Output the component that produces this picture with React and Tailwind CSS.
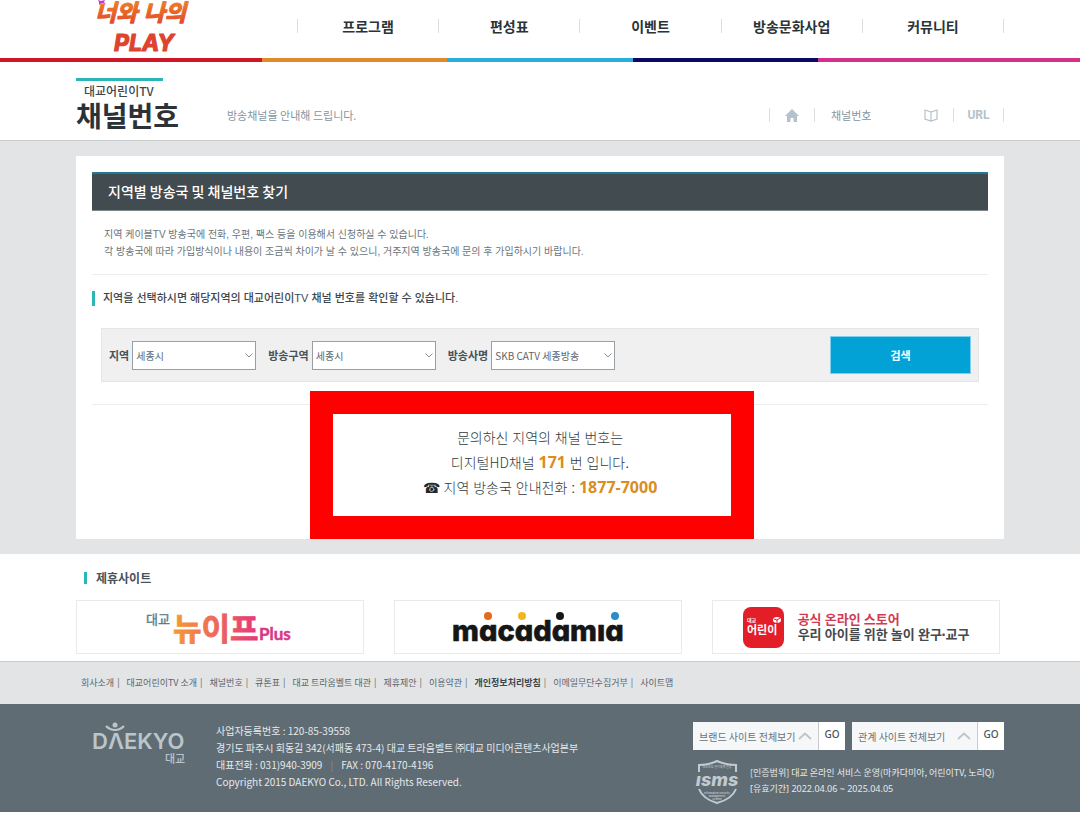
import React, { useState } from "react";

const menus = ["프로그램", "편성표", "이벤트", "방송문화사업", "커뮤니티"];

const footerLinks = [
  "회사소개",
  "대교어린이TV 소개",
  "채널번호",
  "큐톤표",
  "대교 트라움벨트 대관",
  "제휴제안",
  "이용약관",
  "개인정보처리방침",
  "이메일무단수집거부",
  "사이트맵",
];

const filters = [
  { id: "region", label: "지역", options: ["세종시", "서울시", "부산시"] },
  { id: "area", label: "방송구역", options: ["세종시"] },
  { id: "station", label: "방송사명", options: ["SKB CATV 세종방송"] },
];

const Divider = () => <span className="h-[14px] w-px shrink-0 bg-[#dcdfe1]" />;

const PlayLogo = () => (
  <svg width="100" height="58" viewBox="0 0 100 58" role="img">
    <defs>
      <linearGradient id="play" x1="0" y1="0" x2="0" y2="1">
        <stop offset="0" stopColor="#ee8026" />
        <stop offset="1" stopColor="#e0452c" />
      </linearGradient>
    </defs>
    <path d="M6 0l3 1 4-1-1 2 2 2-4-1-3 2v-3z" fill="#c735d6" />
    <g
      fontWeight="700"
      fontStyle="italic"
      strokeWidth="1.2"
      strokeLinejoin="round"
    >
      <text
        x="3"
        y="21"
        fontSize="23"
        fontFamily="'Liberation Sans', 'Noto Sans CJK KR', sans-serif"
        fill="url(#play)"
        stroke="url(#play)"
      >
        너와 나의
      </text>
      <text
        x="22"
        y="51"
        fontSize="23"
        fontFamily="Inter, sans-serif"
        fill="#dd432f"
        stroke="#dd432f"
      >
        PLAY
      </text>
    </g>
  </svg>
);

const Header = () => (
  <header>
    <div className="mx-auto flex h-[58px] max-w-[928px] items-start">
      <a href="#home" className="ml-4 shrink-0">
        <PlayLogo />
      </a>
      <nav className="ml-auto flex h-[52px] w-[707px] items-center">
        <Divider />
        {menus.map((menu) => (
          <React.Fragment key={menu}>
            <a
              href="#menu"
              className="flex-1 text-center text-[14px] leading-5 font-bold text-[#2b3338]"
            >
              {menu}
            </a>
            <Divider />
          </React.Fragment>
        ))}
      </nav>
    </div>
    <div className="flex h-1">
      <div className="flex-1 bg-[#cf1526]" />
      <div className="flex w-[928px]">
        <div className="flex-1 bg-[#cf1526]" />
        <div className="flex-1 bg-[#e08a2a]" />
        <div className="flex-1 bg-[#29aede]" />
        <div className="flex-1 bg-[#0a0a66]" />
        <div className="flex-1 bg-[#d52f8c]" />
      </div>
      <div className="flex-1 bg-[#d52f8c]" />
    </div>
  </header>
);

const PageTitle = () => (
  <div className="border-b border-[#c9cccf]">
    <div className="mx-auto flex h-[78px] max-w-[928px] items-end pb-[9px]">
      <div className="w-[151px]">
        <div className="h-[3px] w-[87px] bg-[#2bb5b8]" />
        <p className="pt-[2px] pl-2 text-[12px] leading-4 font-medium text-[#3c474d]">
          대교어린이TV
        </p>
        <h1 className="text-[28px] leading-8 font-bold text-[#2b3338]">
          채널번호
        </h1>
      </div>
      <p className="pb-2 text-[11px] leading-4 text-[#84959f]">
        방송채널을 안내해 드립니다.
      </p>
      <div className="ml-auto flex h-8 items-center text-[11px] leading-4 text-[#84959f]">
        <Divider />
        <a href="#home" aria-label="홈" className="px-[15px]">
          <svg width="14" height="13" viewBox="0 0 14 13" fill="#b3c3cc">
            <path d="M7 0L0 7h2v6h3.500V9h3v4H12V7h2z" />
          </svg>
        </a>
        <Divider />
        <span className="w-[109px] pl-4">채널번호</span>
        <button type="button" aria-label="스크랩" className="pr-[15px]">
          <svg
            width="14"
            height="13"
            viewBox="0 0 14 13"
            fill="none"
            stroke="#b3c3cc"
            strokeWidth="1.200"
          >
            <path d="M7 3L1 1v9l6 2 6-2V1zM7 3v9" />
          </svg>
        </button>
        <Divider />
        <button
          type="button"
          className="w-[49px] font-[Roboto,sans-serif] text-[12px] font-bold text-[#b3c3cc]"
        >
          URL
        </button>
        <Divider />
      </div>
    </div>
  </div>
);

const FilterSelect = ({ id, label, options }) => (
  <div className="flex items-center gap-[3px]">
    <label htmlFor={id} className="text-[11px] font-bold text-[#47525a]">
      {label}
    </label>
    <div className="relative">
      <select
        id={id}
        className="h-[29px] w-[124px] appearance-none border border-[#9a9fa3] bg-white pl-[3px] text-[10px] text-[#5d666c]"
      >
        {options.map((option) => (
          <option key={option}>{option}</option>
        ))}
      </select>
      <svg
        width="8"
        height="5"
        viewBox="0 0 8 5"
        fill="none"
        stroke="#8a9095"
        className="pointer-events-none absolute top-3 right-[3px]"
      >
        <path d="M.5.500L4 4 7.500.5" />
      </svg>
    </div>
  </div>
);

const ChannelFinder = ({ onSearch }) => (
  <form
    onSubmit={onSearch}
    className="mx-[9px] flex items-center gap-3 border border-[#e4e5e7] bg-[#f0f0f0] p-[7px]"
  >
    {filters.map((filter) => (
      <FilterSelect key={filter.id} {...filter} />
    ))}
    <button
      type="submit"
      className="ml-auto h-[38px] w-[141px] border border-[#7fd0ec] bg-[#02a2d7] text-[11px] font-bold text-white"
    >
      검색
    </button>
  </form>
);

const Result = () => (
  <div className="relative mt-[22px] border-t border-[#eceded] pt-[21px] text-center font-['Liberation_Sans','Noto_Sans_CJK_KR',sans-serif] text-[14px] leading-6 font-light text-[#30393e]">
    <p>문의하신 지역의 채널 번호는</p>
    <p>
      디지털
      <span className="font-['Noto_Sans_CJK_KR',sans-serif]">HD</span>
      채널{" "}
      <strong className="font-['Noto_Sans',sans-serif] text-[16px] font-bold text-[#d98d22]">
        171
      </strong>{" "}
      번 입니다.
    </p>
    <p>
      <span className="font-['DejaVu_Sans',sans-serif] text-[#20282c]">☎</span>{" "}
      지역 방송국 안내전화 :{" "}
      <strong className="font-['Noto_Sans',sans-serif] text-[16px] font-bold text-[#d98d22]">
        1877-7000
      </strong>
    </p>
    <div className="pointer-events-none absolute -top-[14px] left-[218px] h-[148px] w-[444px] border-[23px] border-[#ff0000]" />
  </div>
);

const NewifLogo = () => (
  <svg width="150" height="42" viewBox="0 0 150 42" role="img">
    <defs>
      <linearGradient id="newif" x1="0" y1="0" x2="1" y2="0">
        <stop offset="0" stopColor="#f59a35" />
        <stop offset="0.500" stopColor="#ec6a5a" />
        <stop offset="1" stopColor="#e5357c" />
      </linearGradient>
    </defs>
    <g fontFamily="'Liberation Sans', 'Noto Sans CJK KR', sans-serif">
      <text
        x="1"
        y="18"
        fontSize="13"
        fill="#5c7f86"
        stroke="#5c7f86"
        strokeWidth="0.400"
      >
        대교
      </text>
      <text
        x="28"
        y="34"
        fontSize="31"
        fontWeight="700"
        fill="url(#newif)"
        stroke="url(#newif)"
        strokeWidth="0.800"
      >
        뉴이프
      </text>
    </g>
    <text
      x="114"
      y="34"
      fontSize="17"
      fontWeight="700"
      fontFamily="Lato, sans-serif"
      fill="#d9388a"
      stroke="#d9388a"
      strokeWidth="0.500"
    >
      Plus
    </text>
  </svg>
);

const MacadamiaLogo = () => (
  <svg width="180" height="42" viewBox="0 0 180 42" role="img">
    <text
      x="4"
      y="35"
      fontSize="29"
      fontWeight="800"
      fontFamily="Inter, sans-serif"
      fill="#161616"
      stroke="#161616"
      strokeWidth="0.600"
      strokeLinejoin="round"
      className="[font-feature-settings:'cv11']"
    >
      macadamıa
    </text>
    <circle cx="40" cy="10" r="4" fill="#e46a1e" />
    <circle cx="74" cy="10" r="4" fill="#f2b71f" />
    <circle cx="112" cy="10" r="4" fill="#161616" />
    <circle cx="167" cy="10" r="4" fill="#2a8ccc" />
  </svg>
);

const StoreIcon = () => (
  <svg width="41" height="41" viewBox="0 0 41 41" role="img">
    <rect width="41" height="41" rx="8" fill="#e31e29" />
    <g
      fontFamily="'Liberation Sans', 'Noto Sans CJK KR', sans-serif"
      fontWeight="700"
      fill="#fff"
    >
      <text x="4" y="15" fontSize="5">
        대교
      </text>
      <text x="4" y="27" fontSize="11">
        어린이
      </text>
    </g>
    <ellipse cx="34" cy="13" rx="4" ry="3" fill="#fff" />
    <path d="M31 12l3 1 3-2M34 13v3" stroke="#e31e29" fill="none" />
  </svg>
);

const Partners = () => (
  <section className="mx-auto max-w-[928px] pt-[14px] pb-[7px]">
    <h2 className="ml-2 flex items-center gap-[9px] text-[12px] leading-5 font-bold text-[#47525a]">
      <span className="h-3 w-[3px] bg-[#2bb5b8]" />
      제휴사이트
    </h2>
    <div className="mt-3 mr-1 grid grid-cols-3 gap-[30px]">
      <a
        href="#newif"
        className="flex h-[54px] items-center justify-center border border-[#e9eaeb]"
      >
        <NewifLogo />
      </a>
      <a
        href="#macadamia"
        className="flex h-[54px] items-center justify-center border border-[#e9eaeb]"
      >
        <MacadamiaLogo />
      </a>
      <a
        href="#store"
        className="flex h-[54px] items-center justify-center gap-[14px] border border-[#e9eaeb] font-[Lato,'Noto_Sans_CJK_KR',sans-serif] text-[13px] leading-[15px] font-bold text-[#44494c]"
      >
        <StoreIcon />
        <span>
          <span className="block text-[#d43a52]">공식 온라인 스토어</span>
          우리 아이를 위한 놀이 완구·교구
        </span>
      </a>
    </div>
  </section>
);

const DaekyoLogo = () => (
  <svg width="98" height="46" viewBox="0 0 98 46" fill="#bcc5ca" role="img">
    <text
      x="0"
      y="27"
      fontSize="22"
      fontWeight="600"
      fontFamily="Inter, sans-serif"
    >
      DΛEKYO
    </text>
    <circle cx="23" cy="3" r="2.500" />
    <path
      d="M14 4q4 4 9 4t9-4"
      fill="none"
      stroke="#bcc5ca"
      strokeWidth="2.200"
    />
    <text
      x="73"
      y="41"
      fontSize="11"
      fontWeight="500"
      fontFamily="'Liberation Sans', 'Noto Sans CJK KR', sans-serif"
    >
      대교
    </text>
  </svg>
);

const IsmsBadge = () => (
  <svg width="49" height="45" viewBox="0 0 49 45" role="img">
    <g fill="none" stroke="#c3cacf" strokeWidth="2">
      <path d="M6 13V6q10 0 18-4 9 4 19 4v7" />
      <path d="M6 30q4 10 18 14 15-4 19-14" />
    </g>
    <g fill="#c3cacf" textAnchor="middle" fontFamily="Inter, sans-serif">
      <text
        x="24"
        y="27"
        fontSize="18"
        fontWeight="800"
        fontStyle="italic"
      >
        ısms
      </text>
      <text
        x="24"
        y="9"
        fontSize="3"
        fontFamily="'Liberation Sans', 'Noto Sans CJK KR', sans-serif"
      >
        정보보호 관리체계 인증
      </text>
      <g fontSize="2.600" fontWeight="600">
        <text x="24" y="34.500">
          Information Security
        </text>
        <text x="24" y="38">
          Management
        </text>
        <text x="24" y="41.300">
          System
        </text>
      </g>
    </g>
  </svg>
);

const SiteList = ({ label }) => (
  <div className="flex h-7 text-[#4b555b]">
    <button
      type="button"
      className="flex w-[125px] items-center justify-between bg-[#f6f7f8] px-[6px] text-[10px] text-[#66717a]"
    >
      {label}
      <svg
        width="14"
        height="8"
        viewBox="0 0 14 8"
        fill="none"
        stroke="#bfc4c8"
        strokeWidth="1.800"
      >
        <path d="M1 7l6-5.500L13 7" />
      </svg>
    </button>
    <button
      type="button"
      className="w-[27px] border-l border-[#c9cccf] bg-white pb-1 font-['Noto_Sans',sans-serif] text-[10px] font-medium"
    >
      GO
    </button>
  </div>
);

const Footer = () => (
  <footer>
    <div className="border-t border-[#c9cccf] bg-[#e2e4e6]">
      <ul className="mx-auto flex h-[42px] max-w-[928px] items-center pl-[5px] text-[9px] leading-4 text-[#5a656c]">
        {footerLinks.map((link, i) => (
          <li key={link} className="flex items-center">
            {i > 0 && <span className="pr-[7px] pl-[3px]">|</span>}
            <a
              href="#link"
              className={
                link === "개인정보처리방침" ? "font-bold text-[#3c474d]" : ""
              }
            >
              {link}
            </a>
          </li>
        ))}
      </ul>
    </div>
    <div className="bg-[#5f6c74]">
      <div className="mx-auto flex max-w-[928px] items-start pt-[18px] pb-2 text-[#e6e9eb]">
        <div className="w-[140px] pl-4">
          <DaekyoLogo />
        </div>
        <address className="text-[10px] leading-[17px] not-italic">
          <p>사업자등록번호 : 120-85-39558</p>
          <p>
            경기도 파주시 회동길 342(서패동 473-4) 대교 트라움벨트 ㈜대교
            미디어콘텐츠사업본부
          </p>
          <p>
            대표전화 : 031)940-3909
            <span className="px-2 text-[#87929a]">|</span>
            FAX : 070-4170-4196
          </p>
          <p>Copyright 2015 DAEKYO Co., LTD. All Rights Reserved.</p>
        </address>
        <div className="ml-auto">
          <div className="flex gap-[7px]">
            <SiteList label="브랜드 사이트 전체보기" />
            <SiteList label="관계 사이트 전체보기" />
          </div>
          <div className="mt-[9px] flex items-start gap-2 text-[9px] leading-4">
            <IsmsBadge />
            <div className="pt-[6px]">
              <p>
                [인증범위] 대교 온라인 서비스 운영(마카다미아, 어린이TV, 노리Q)
              </p>
              <p className="font-['Noto_Sans','Noto_Sans_CJK_KR',sans-serif]">
                [유효기간] 2022.04.06 ~ 2025.04.05
              </p>
            </div>
          </div>
        </div>
      </div>
    </div>
  </footer>
);

const App = () => {
  const [searched, setSearched] = useState(true);

  const handleSearch = (e) => {
    e.preventDefault();
    setSearched(true);
  };

  return (
    <div className="bg-white font-['Noto_Sans_CJK_KR',sans-serif]">
      <Header />
      <PageTitle />
      <main className="bg-[#e2e4e6] py-[15px]">
        <div className="mx-auto min-h-[383px] max-w-[928px] bg-white px-4 pt-4">
          <h2 className="border-t-2 border-b border-t-[#1c7c96] border-b-[#7b878d] bg-[#414b50] px-4 pt-[7px] pb-[9px] text-[14px] leading-5 font-medium text-white">
            지역별 방송국 및 채널번호 찾기
          </h2>
          <div className="border-b border-[#eceded] px-3 pt-[15px] pb-[14px] font-['Liberation_Sans','Noto_Sans_CJK_KR',sans-serif] text-[10px] leading-[17px] text-[#6a757b]">
            <p>
              지역 케이블TV 방송국에 전화, 우편, 팩스 등을 이용해서 신청하실 수
              있습니다.
            </p>
            <p>
              각 방송국에 따라 가입방식이나 내용이 조금씩 차이가 날 수 있으니,
              거주지역 방송국에 문의 후 가입하시기 바랍니다.
            </p>
          </div>
          <h3 className="mt-[13px] mb-3 flex items-center gap-2 font-['Liberation_Sans','Noto_Sans_CJK_KR',sans-serif] text-[11px] leading-5 font-medium text-[#3c474d]">
            <span className="h-[15px] w-[3px] bg-[#2bb5b8]" />
            지역을 선택하시면 해당지역의 대교어린이TV 채널 번호를 확인할 수
            있습니다.
          </h3>
          <div className="pt-2">
            <ChannelFinder onSearch={handleSearch} />
          </div>
          {searched && <Result />}
        </div>
      </main>
      <Partners />
      <Footer />
    </div>
  );
};

export default App;
